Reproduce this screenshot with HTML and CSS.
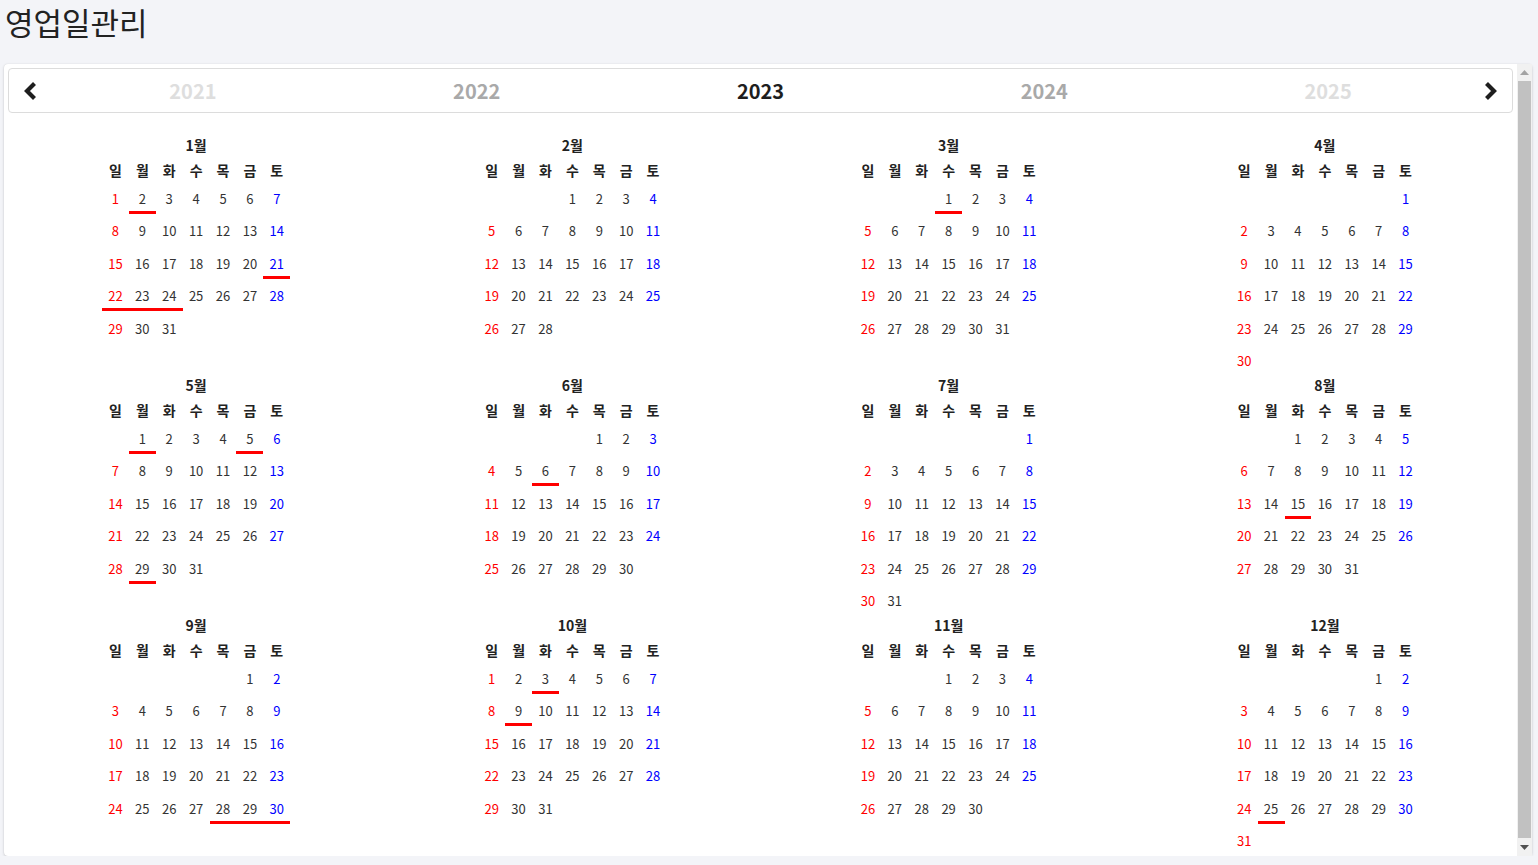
FILE: index.html
```html
<!DOCTYPE html>
<html lang="ko">
<head>
<meta charset="utf-8">
<title>영업일관리</title>
<link rel="stylesheet" href="styles.css">
</head>
<body>
<h1 class="page-title">영업일관리</h1>
<div class="panel">
  <div class="scroller">
    <div class="yearbar">
      <div class="arrow"><svg width="14" height="18" viewBox="0 0 14 18"><polyline points="11.5,1.5 4,9 11.5,16.5" fill="none" stroke="#1e1e1e" stroke-width="4.2"/></svg></div>
      <div class="year far">2021</div>
      <div class="year near">2022</div>
      <div class="year cur">2023</div>
      <div class="year near">2024</div>
      <div class="year far">2025</div>
      <div class="arrow"><svg width="14" height="18" viewBox="0 0 14 18"><polyline points="2.5,1.5 10,9 2.5,16.5" fill="none" stroke="#1e1e1e" stroke-width="4.2"/></svg></div>
    </div>

    <div class="months">
      <div class="month">
        <div class="mtitle">1월</div>
        <div class="wk"><span>일</span><span>월</span><span>화</span><span>수</span><span>목</span><span>금</span><span>토</span></div>
        <div class="days"><span>1</span><span class="x">2</span><span>3</span><span>4</span><span>5</span><span>6</span><span>7</span><span>8</span><span>9</span><span>10</span><span>11</span><span>12</span><span>13</span><span>14</span><span>15</span><span>16</span><span>17</span><span>18</span><span>19</span><span>20</span><span class="x">21</span><span class="x">22</span><span class="x">23</span><span class="x">24</span><span>25</span><span>26</span><span>27</span><span>28</span><span>29</span><span>30</span><span>31</span></div>
      </div>
      <div class="month">
        <div class="mtitle">2월</div>
        <div class="wk"><span>일</span><span>월</span><span>화</span><span>수</span><span>목</span><span>금</span><span>토</span></div>
        <div class="days"><span></span><span></span><span></span><span>1</span><span>2</span><span>3</span><span>4</span><span>5</span><span>6</span><span>7</span><span>8</span><span>9</span><span>10</span><span>11</span><span>12</span><span>13</span><span>14</span><span>15</span><span>16</span><span>17</span><span>18</span><span>19</span><span>20</span><span>21</span><span>22</span><span>23</span><span>24</span><span>25</span><span>26</span><span>27</span><span>28</span></div>
      </div>
      <div class="month">
        <div class="mtitle">3월</div>
        <div class="wk"><span>일</span><span>월</span><span>화</span><span>수</span><span>목</span><span>금</span><span>토</span></div>
        <div class="days"><span></span><span></span><span></span><span class="x">1</span><span>2</span><span>3</span><span>4</span><span>5</span><span>6</span><span>7</span><span>8</span><span>9</span><span>10</span><span>11</span><span>12</span><span>13</span><span>14</span><span>15</span><span>16</span><span>17</span><span>18</span><span>19</span><span>20</span><span>21</span><span>22</span><span>23</span><span>24</span><span>25</span><span>26</span><span>27</span><span>28</span><span>29</span><span>30</span><span>31</span></div>
      </div>
      <div class="month">
        <div class="mtitle">4월</div>
        <div class="wk"><span>일</span><span>월</span><span>화</span><span>수</span><span>목</span><span>금</span><span>토</span></div>
        <div class="days"><span></span><span></span><span></span><span></span><span></span><span></span><span>1</span><span>2</span><span>3</span><span>4</span><span>5</span><span>6</span><span>7</span><span>8</span><span>9</span><span>10</span><span>11</span><span>12</span><span>13</span><span>14</span><span>15</span><span>16</span><span>17</span><span>18</span><span>19</span><span>20</span><span>21</span><span>22</span><span>23</span><span>24</span><span>25</span><span>26</span><span>27</span><span>28</span><span>29</span><span>30</span></div>
      </div>

      <div class="month">
        <div class="mtitle">5월</div>
        <div class="wk"><span>일</span><span>월</span><span>화</span><span>수</span><span>목</span><span>금</span><span>토</span></div>
        <div class="days"><span></span><span class="x">1</span><span>2</span><span>3</span><span>4</span><span class="x">5</span><span>6</span><span>7</span><span>8</span><span>9</span><span>10</span><span>11</span><span>12</span><span>13</span><span>14</span><span>15</span><span>16</span><span>17</span><span>18</span><span>19</span><span>20</span><span>21</span><span>22</span><span>23</span><span>24</span><span>25</span><span>26</span><span>27</span><span>28</span><span class="x">29</span><span>30</span><span>31</span></div>
      </div>
      <div class="month">
        <div class="mtitle">6월</div>
        <div class="wk"><span>일</span><span>월</span><span>화</span><span>수</span><span>목</span><span>금</span><span>토</span></div>
        <div class="days"><span></span><span></span><span></span><span></span><span>1</span><span>2</span><span>3</span><span>4</span><span>5</span><span class="x">6</span><span>7</span><span>8</span><span>9</span><span>10</span><span>11</span><span>12</span><span>13</span><span>14</span><span>15</span><span>16</span><span>17</span><span>18</span><span>19</span><span>20</span><span>21</span><span>22</span><span>23</span><span>24</span><span>25</span><span>26</span><span>27</span><span>28</span><span>29</span><span>30</span></div>
      </div>
      <div class="month">
        <div class="mtitle">7월</div>
        <div class="wk"><span>일</span><span>월</span><span>화</span><span>수</span><span>목</span><span>금</span><span>토</span></div>
        <div class="days"><span></span><span></span><span></span><span></span><span></span><span></span><span>1</span><span>2</span><span>3</span><span>4</span><span>5</span><span>6</span><span>7</span><span>8</span><span>9</span><span>10</span><span>11</span><span>12</span><span>13</span><span>14</span><span>15</span><span>16</span><span>17</span><span>18</span><span>19</span><span>20</span><span>21</span><span>22</span><span>23</span><span>24</span><span>25</span><span>26</span><span>27</span><span>28</span><span>29</span><span>30</span><span>31</span></div>
      </div>
      <div class="month">
        <div class="mtitle">8월</div>
        <div class="wk"><span>일</span><span>월</span><span>화</span><span>수</span><span>목</span><span>금</span><span>토</span></div>
        <div class="days"><span></span><span></span><span>1</span><span>2</span><span>3</span><span>4</span><span>5</span><span>6</span><span>7</span><span>8</span><span>9</span><span>10</span><span>11</span><span>12</span><span>13</span><span>14</span><span class="x">15</span><span>16</span><span>17</span><span>18</span><span>19</span><span>20</span><span>21</span><span>22</span><span>23</span><span>24</span><span>25</span><span>26</span><span>27</span><span>28</span><span>29</span><span>30</span><span>31</span></div>
      </div>

      <div class="month">
        <div class="mtitle">9월</div>
        <div class="wk"><span>일</span><span>월</span><span>화</span><span>수</span><span>목</span><span>금</span><span>토</span></div>
        <div class="days"><span></span><span></span><span></span><span></span><span></span><span>1</span><span>2</span><span>3</span><span>4</span><span>5</span><span>6</span><span>7</span><span>8</span><span>9</span><span>10</span><span>11</span><span>12</span><span>13</span><span>14</span><span>15</span><span>16</span><span>17</span><span>18</span><span>19</span><span>20</span><span>21</span><span>22</span><span>23</span><span>24</span><span>25</span><span>26</span><span>27</span><span class="x">28</span><span class="x">29</span><span class="x">30</span></div>
      </div>
      <div class="month">
        <div class="mtitle">10월</div>
        <div class="wk"><span>일</span><span>월</span><span>화</span><span>수</span><span>목</span><span>금</span><span>토</span></div>
        <div class="days"><span>1</span><span>2</span><span class="x">3</span><span>4</span><span>5</span><span>6</span><span>7</span><span>8</span><span class="x">9</span><span>10</span><span>11</span><span>12</span><span>13</span><span>14</span><span>15</span><span>16</span><span>17</span><span>18</span><span>19</span><span>20</span><span>21</span><span>22</span><span>23</span><span>24</span><span>25</span><span>26</span><span>27</span><span>28</span><span>29</span><span>30</span><span>31</span></div>
      </div>
      <div class="month">
        <div class="mtitle">11월</div>
        <div class="wk"><span>일</span><span>월</span><span>화</span><span>수</span><span>목</span><span>금</span><span>토</span></div>
        <div class="days"><span></span><span></span><span></span><span>1</span><span>2</span><span>3</span><span>4</span><span>5</span><span>6</span><span>7</span><span>8</span><span>9</span><span>10</span><span>11</span><span>12</span><span>13</span><span>14</span><span>15</span><span>16</span><span>17</span><span>18</span><span>19</span><span>20</span><span>21</span><span>22</span><span>23</span><span>24</span><span>25</span><span>26</span><span>27</span><span>28</span><span>29</span><span>30</span></div>
      </div>
      <div class="month">
        <div class="mtitle">12월</div>
        <div class="wk"><span>일</span><span>월</span><span>화</span><span>수</span><span>목</span><span>금</span><span>토</span></div>
        <div class="days"><span></span><span></span><span></span><span></span><span></span><span>1</span><span>2</span><span>3</span><span>4</span><span>5</span><span>6</span><span>7</span><span>8</span><span>9</span><span>10</span><span>11</span><span>12</span><span>13</span><span>14</span><span>15</span><span>16</span><span>17</span><span>18</span><span>19</span><span>20</span><span>21</span><span>22</span><span>23</span><span>24</span><span class="x">25</span><span>26</span><span>27</span><span>28</span><span>29</span><span>30</span><span>31</span></div>
      </div>
    </div>
  </div>
  <div class="vscroll">
    <div class="sb-btn"><svg width="9" height="5" viewBox="0 0 9 5"><polygon points="0,5 4.5,0 9,5" fill="#a3a3a3"/></svg></div>
    <div class="sb-thumb"></div>
    <div class="sb-btn"><svg width="9" height="5" viewBox="0 0 9 5"><polygon points="0,0 9,0 4.5,5" fill="#505050"/></svg></div>
  </div>
</div>
</body>
</html>
```
FILE: styles.css
```css
html, body {
  margin: 0;
  padding: 0;
}
body {
  background: #f3f4f8;
  font-family: "Noto Sans CJK KR", "Noto Sans", sans-serif;
  color: #333;
  overflow: hidden;
}
.page-title {
  margin: 0 0 20px 0;
  padding-left: 5px;
  height: 44px;
  line-height: 44px;
  font-size: 31px;
  font-weight: 400;
  color: #222;
}
.panel {
  display: flex;
  margin: 0 6px 0 4px;
  height: 792px;
  background: #fff;
  border-radius: 4px;
  box-shadow: 0 1px 3px rgba(0, 0, 0, 0.16), 0 0 1px rgba(0, 0, 0, 0.12);
}
.scroller {
  flex: 1;
  min-width: 0;
  overflow: hidden;
  padding: 4px;
}
.vscroll {
  width: 15px;
  flex: none;
  display: flex;
  flex-direction: column;
  background: #f1f1f1;
}
.sb-btn {
  height: 17px;
  display: flex;
  align-items: center;
  justify-content: center;
}
.sb-thumb {
  flex: 1;
  margin: 0 1px 1px 1px;
  background: #c1c1c1;
}
.yearbar {
  display: flex;
  align-items: center;
  height: 45px;
  box-sizing: border-box;
  border: 1px solid #dcdcdc;
  border-radius: 4px;
}
.arrow {
  width: 42px;
  display: flex;
  align-items: center;
  justify-content: center;
  height: 100%;
}
.year {
  flex: 1;
  text-align: center;
  font-size: 20px;
  font-weight: 700;
  line-height: 43px;
}
.year.far { color: #dedede; }
.year.near { color: #a9a9a9; }
.year.cur { color: #1e1e1e; }

.months {
  display: grid;
  grid-template-columns: repeat(4, 1fr);
  grid-auto-rows: 240px;
  margin-top: 20px;
}
.month {
  display: flex;
  flex-direction: column;
  align-items: center;
}
.mtitle {
  height: 24px;
  line-height: 24px;
  font-size: 14px;
  font-weight: 700;
  color: #222;
}
.wk, .days {
  display: grid;
  grid-template-columns: repeat(7, 26.9px);
}
.wk span {
  height: 26px;
  line-height: 26px;
  text-align: center;
  font-size: 14px;
  font-weight: 700;
  color: #222;
}
.days {
  grid-auto-rows: 32.4px;
}
.days span {
  display: block;
  height: 31px;
  box-sizing: border-box;
  line-height: 32px;
  text-align: center;
  font-size: 13px;
  color: #333;
}
.days span:nth-child(7n+1) { color: #ff0000; }
.days span:nth-child(7n) { color: #0000ff; }
.days span.x { border-bottom: 3px solid #f00; }
```
